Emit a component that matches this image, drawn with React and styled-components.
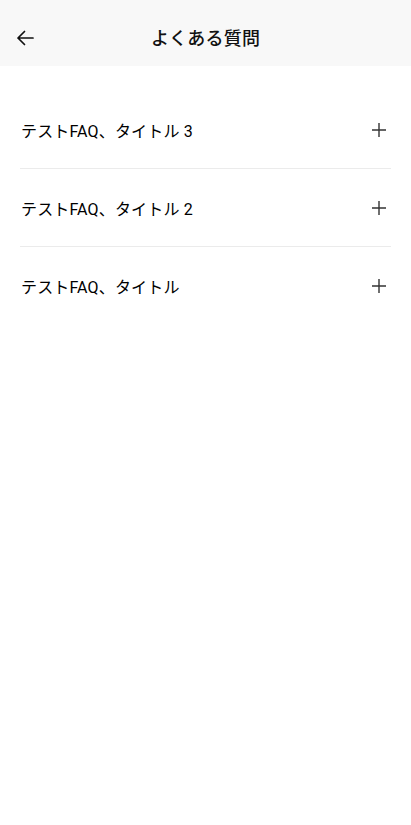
import React from 'react';
import styled, { createGlobalStyle } from 'styled-components';

const GlobalStyle = createGlobalStyle`
  html, body {
    margin: 0;
    padding: 0;
    background: #ffffff;
  }
  body {
    font-family: Roboto, "Noto Sans CJK JP", "Noto Sans", sans-serif;
    color: #111;
  }
`;

const Page = styled.div`
  min-height: 100vh;
  background: #fff;
`;

const Header = styled.header`
  position: relative;
  height: 66px;
  background: #f8f8f8;
  display: flex;
  align-items: center;
  justify-content: center;
  padding-top: 8px;
  box-sizing: border-box;
`;

const BackButton = styled.button`
  position: absolute;
  left: 12px;
  top: 25px;
  width: 26px;
  height: 26px;
  padding: 0;
  border: none;
  background: none;
  display: flex;
  align-items: center;
  justify-content: center;
  cursor: pointer;
`;

const Title = styled.h1`
  margin: 0;
  font-size: 18px;
  font-weight: 500;
  color: #111;
  letter-spacing: 0.2px;
`;

const List = styled.div`
  padding: 25px 20px 0;
`;

const Row = styled.div`
  height: 77px;
  display: flex;
  align-items: center;
  justify-content: space-between;
  border-bottom: ${p => (p.last ? 'none' : '1px solid #ebebeb')};
  cursor: pointer;
`;

const Question = styled.span`
  font-size: 16px;
  font-weight: 400;
  color: #000;
  padding-left: 1px;
  letter-spacing: 0.15px;
`;

const PlusIcon = styled.svg`
  width: 16px;
  height: 16px;
  margin-right: 4px;
  flex-shrink: 0;
`;

const items = ['テストFAQ、タイトル 3', 'テストFAQ、タイトル 2', 'テストFAQ、タイトル'];

export default function App() {
  return (
    <Page>
      <GlobalStyle />
      <Header>
        <BackButton aria-label="戻る">
          <svg width="20" height="20" viewBox="0 0 20 20" fill="none">
            <path d="M18 10H3M9.5 3.5L3 10l6.5 6.5" stroke="#111" strokeWidth="1.7" strokeLinecap="round" strokeLinejoin="round" />
          </svg>
        </BackButton>
        <Title>よくある質問</Title>
      </Header>
      <List>
        {items.map((q, i) => (
          <Row key={q} last={i === items.length - 1}>
            <Question>{q}</Question>
            <PlusIcon viewBox="0 0 16 16" fill="none">
              <path d="M8 1v14M1 8h14" stroke="#333" strokeWidth="1.4" />
            </PlusIcon>
          </Row>
        ))}
      </List>
    </Page>
  );
}
